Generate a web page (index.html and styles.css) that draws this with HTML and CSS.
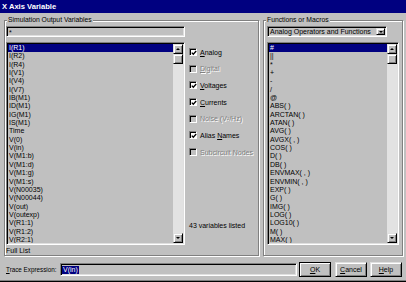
FILE: index.html
```html
<!DOCTYPE html>
<html lang="en">
<head>
  <meta charset="UTF-8" />
  <title>X Axis Variable</title>
  <link rel="stylesheet" href="styles.css">
</head>
<body>

  <div class="window">
    <div class="titlebar">X Axis Variable</div>

    <div class="groups">
      <!-- Left group: output variables + filters -->
      <fieldset class="group group-vars">
        <legend>Simulation Output Variables</legend>
        <div class="vars-layout">
          <div class="var-col">
            <div class="sunken field">*</div>
            <div class="sunken listbox">
              <div class="items">
                <div class="item selected">I(R1)</div>
                <div class="item">I(R2)</div>
                <div class="item">I(R4)</div>
                <div class="item">I(V1)</div>
                <div class="item">I(V4)</div>
                <div class="item">I(V7)</div>
                <div class="item">IB(M1)</div>
                <div class="item">ID(M1)</div>
                <div class="item">IG(M1)</div>
                <div class="item">IS(M1)</div>
                <div class="item">Time</div>
                <div class="item">V(0)</div>
                <div class="item">V(in)</div>
                <div class="item">V(M1:b)</div>
                <div class="item">V(M1:d)</div>
                <div class="item">V(M1:g)</div>
                <div class="item">V(M1:s)</div>
                <div class="item">V(N00035)</div>
                <div class="item">V(N00044)</div>
                <div class="item">V(out)</div>
                <div class="item">V(outexp)</div>
                <div class="item">V(R1:1)</div>
                <div class="item">V(R1:2)</div>
                <div class="item">V(R2:1)</div>
              </div>
              <div class="scrollbar">
                <div class="raised sb-btn"><span class="arrow up"></span></div>
                <div class="raised sb-thumb"></div>
                <div class="sb-track"></div>
                <div class="raised sb-btn"><span class="arrow down"></span></div>
              </div>
            </div>
            <div class="status">Full List</div>
          </div>

          <div class="checks">
            <div class="check">
              <span class="box"><svg viewBox="0 0 6 6"><path d="M0.8 2.6 L2.3 4.2 L5.2 1"/></svg></span>
              <span><u>A</u>nalog</span>
            </div>
            <div class="check disabled">
              <span class="box"></span>
              <span><u>D</u>igital</span>
            </div>
            <div class="check">
              <span class="box"><svg viewBox="0 0 6 6"><path d="M0.8 2.6 L2.3 4.2 L5.2 1"/></svg></span>
              <span><u>V</u>oltages</span>
            </div>
            <div class="check">
              <span class="box"><svg viewBox="0 0 6 6"><path d="M0.8 2.6 L2.3 4.2 L5.2 1"/></svg></span>
              <span><u>C</u>urrents</span>
            </div>
            <div class="check disabled">
              <span class="box"></span>
              <span>Noise (V²/Hz)</span>
            </div>
            <div class="check">
              <span class="box"><svg viewBox="0 0 6 6"><path d="M0.8 2.6 L2.3 4.2 L5.2 1"/></svg></span>
              <span>Alias <u>N</u>ames</span>
            </div>
            <div class="check disabled">
              <span class="box"></span>
              <span>Subcircuit Nodes</span>
            </div>
            <div class="count">43 variables listed</div>
          </div>
        </div>
      </fieldset>

      <!-- Right group: functions -->
      <fieldset class="group group-funcs">
        <legend>Functions or Macros</legend>
        <div class="sunken dropdown">
          <span class="dd-text">Analog Operators and Functions</span>
          <span class="raised dd-btn"><span class="arrow down"></span></span>
        </div>
        <div class="sunken listbox listbox-funcs">
          <div class="items">
            <div class="item selected">#</div>
            <div class="item">||</div>
            <div class="item">*</div>
            <div class="item">+</div>
            <div class="item">-</div>
            <div class="item">/</div>
            <div class="item">@</div>
            <div class="item">ABS( )</div>
            <div class="item">ARCTAN( )</div>
            <div class="item">ATAN( )</div>
            <div class="item">AVG( )</div>
            <div class="item">AVGX( , )</div>
            <div class="item">COS( )</div>
            <div class="item">D( )</div>
            <div class="item">DB( )</div>
            <div class="item">ENVMAX( , )</div>
            <div class="item">ENVMIN( , )</div>
            <div class="item">EXP( )</div>
            <div class="item">G( )</div>
            <div class="item">IMG( )</div>
            <div class="item">LOG( )</div>
            <div class="item">LOG10( )</div>
            <div class="item">M( )</div>
            <div class="item">MAX( )</div>
          </div>
          <div class="scrollbar">
            <div class="raised sb-btn"><span class="arrow up"></span></div>
            <div class="raised sb-thumb"></div>
            <div class="sb-track"></div>
            <div class="raised sb-btn"><span class="arrow down"></span></div>
          </div>
        </div>
      </fieldset>
    </div>

    <!-- Bottom row -->
    <div class="trace-row">
      <span class="trace-label"><u>T</u>race Expression:</span>
      <div class="sunken trace-field"><span class="sel">V(in)</span></div>
      <button class="raised btn btn-default"><u>O</u>K</button>
      <button class="raised btn btn-cancel"><u>C</u>ancel</button>
      <button class="raised btn btn-help"><u>H</u>elp</button>
    </div>
  </div>

</body>
</html>
```

FILE: styles.css
```css
* {
  box-sizing: border-box;
}
body {
  margin: 0;
  background: #c0c0c0;
  font-family: "Liberation Sans", Arial, sans-serif;
  font-size: 7px;
  color: #000;
}
.window {
  width: 406px;
  height: 282px;
  border-bottom: 1px solid #000;
  box-shadow: inset 0 -1px 0 #808080;
}
.titlebar {
  height: 13px;
  padding-left: 2px;
  background: #000080;
  color: #fff;
  font-weight: bold;
  font-size: 7.6px;
  line-height: 13px;
}

/* 3D borders */
.sunken {
  border: 1px solid;
  border-color: #808080 #fff #fff #808080;
  box-shadow: inset 1px 1px 0 #000, inset -1px -1px 0 #dfdfdf;
  padding: 1px;
  background: #c0c0c0;
}
.raised {
  background: #c0c0c0;
  border: 1px solid;
  border-color: #dfdfdf #000 #000 #dfdfdf;
  box-shadow: inset 1px 1px 0 #fff, inset -1px -1px 0 #808080;
}

/* group boxes */
.groups {
  display: flex;
  gap: 4px;
  margin-top: 3px;
  padding-left: 4px;
}
.group {
  margin: 0;
  min-width: 0;
  border: 1px solid #808080;
  box-shadow: inset 1px 1px 0 #fff, 1px 1px 0 #fff;
  padding: 2px 0 0 1px;
}
.group legend {
  padding: 0 1px;
  line-height: 8px;
  font-size: 6.8px;
  background: #c0c0c0;
}
.group-vars {
  width: 255px;
}
.group-vars legend {
  margin-left: 1px;
}
.group-funcs {
  width: 140px;
  padding-left: 3px;
}
.group-funcs legend {
  margin-left: -1px;
}

.vars-layout {
  display: flex;
}
.var-col {
  width: 179px;
}
.field {
  height: 11px;
  line-height: 9px;
  padding-left: 2px;
}
.listbox {
  display: flex;
  height: 203px;
  margin-top: 5px;
  overflow: hidden;
}
.items {
  flex: 1;
  overflow: hidden;
}
.item {
  height: 8.35px;
  line-height: 8.35px;
  padding-left: 1px;
  white-space: nowrap;
}
.item.selected {
  background: #000080;
  color: #fff;
}
.status {
  margin-top: 2px;
  line-height: 8px;
}

/* scrollbar */
.scrollbar {
  width: 10px;
  display: flex;
  flex-direction: column;
  background: #e2e2e2;
}
.sb-btn, .sb-thumb {
  height: 10px;
  display: flex;
  align-items: center;
  justify-content: center;
}
.sb-track {
  flex: 1;
}
.arrow {
  width: 0;
  height: 0;
  border-left: 2.5px solid transparent;
  border-right: 2.5px solid transparent;
}
.arrow.up {
  border-bottom: 2.5px solid #000;
}
.arrow.down {
  border-top: 2.5px solid #000;
}

/* checkboxes */
.checks {
  display: flex;
  flex-direction: column;
  gap: 8.7px;
  margin-left: 4px;
  margin-top: 22px;
}
.check {
  display: flex;
  align-items: center;
  gap: 3px;
  height: 8px;
  white-space: nowrap;
}
.box {
  width: 8px;
  height: 8px;
  border: 1px solid;
  border-color: #808080 #fff #fff #808080;
  box-shadow: inset 1px 1px 0 #000;
  background: #fff;
  padding: 1px 0 0 1px;
}
.box svg {
  display: block;
  width: 6px;
  height: 6px;
}
.box path {
  fill: none;
  stroke: #000;
  stroke-width: 1.3;
}
.check.disabled {
  color: #808080;
  text-shadow: 1px 1px 0 #fff;
}
.check.disabled .box {
  background: #c0c0c0;
}
.count {
  margin-top: 57px;
  line-height: 8px;
}

/* dropdown */
.dropdown {
  display: flex;
  width: 120px;
  height: 11px;
}
.dd-text {
  flex: 1;
  line-height: 7px;
  padding-left: 1px;
  white-space: nowrap;
}
.dd-btn {
  width: 9px;
  height: 7px;
  display: flex;
  align-items: center;
  justify-content: center;
}
.listbox-funcs {
  width: 132px;
}

/* bottom row */
.trace-row {
  display: flex;
  align-items: center;
  height: 15px;
  margin-top: 6px;
  padding-left: 6px;
}
.trace-label {
  width: 54px;
  font-size: 6.3px;
  white-space: nowrap;
}
.trace-field {
  width: 237px;
  height: 13px;
  display: flex;
  align-items: center;
  padding-left: 1px;
}
.trace-field .sel {
  background: #000080;
  color: #fff;
  line-height: 8px;
  padding: 0 1px;
}
.btn {
  width: 32px;
  height: 15px;
  padding: 0;
  font-family: inherit;
  font-size: 7px;
  color: #000;
}
.btn-default {
  margin-left: 2px;
  border-color: #000;
}
.btn-cancel {
  margin-left: 4px;
}
.btn-help {
  margin-left: 3px;
}
```
